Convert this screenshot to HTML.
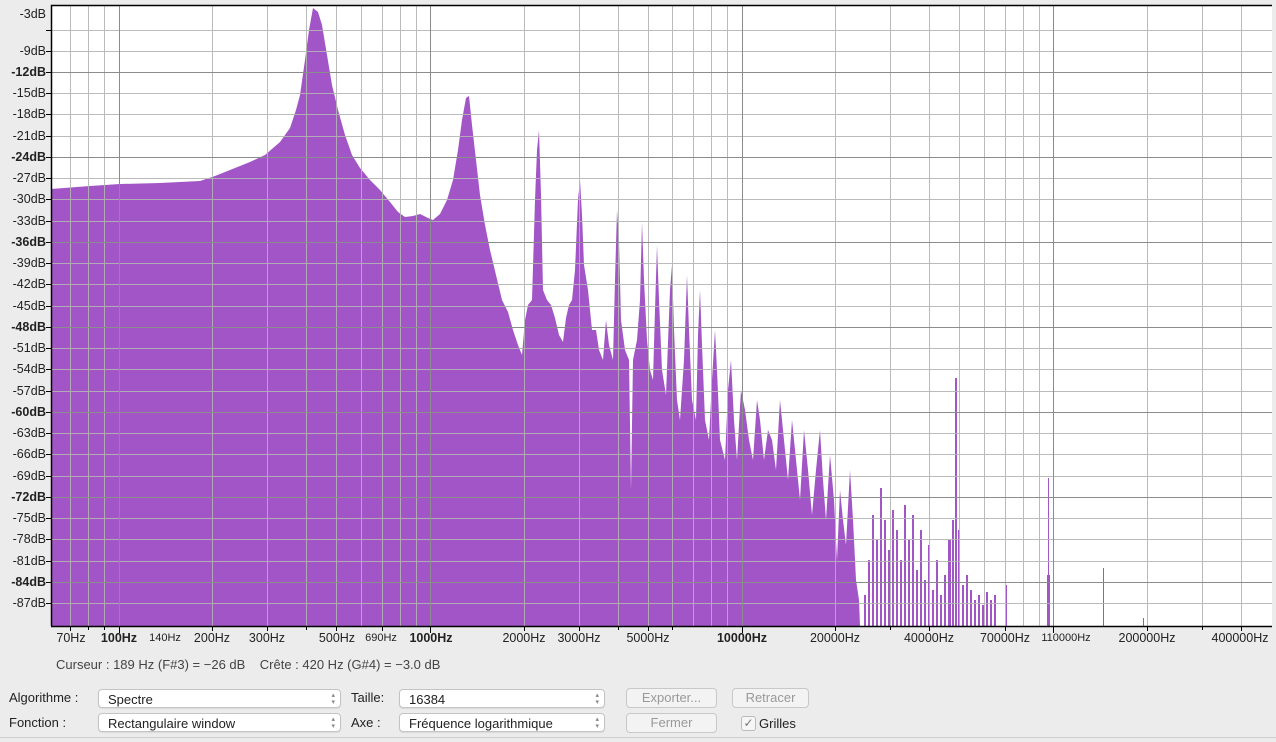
<!DOCTYPE html>
<html><head><meta charset="utf-8"><style>
html,body{margin:0;padding:0;background:#ececec;width:1276px;height:742px;overflow:hidden;font-family:"Liberation Sans",sans-serif;color:#222}
.t{position:absolute;font-size:13px;white-space:nowrap}
.sel{position:absolute;height:19px;border:1px solid #c4c4c4;border-radius:4px;background:#fff;font-size:13px;line-height:19px;padding-left:9px;box-sizing:border-box;box-shadow:0 1px 1px rgba(0,0,0,.08)}
.sel:after{content:"▴\A▾";white-space:pre;position:absolute;right:5px;top:2px;font-size:7px;line-height:7px;color:#888}
.btn{position:absolute;height:20px;border:1px solid #c8c8c8;border-radius:4px;background:#f3f3f3;color:#999;font-size:13px;line-height:18px;text-align:center;box-sizing:border-box}
</style></head><body>
<svg width="1276" height="742" style="position:absolute;left:0;top:0" font-family="Liberation Sans, sans-serif" font-size="12.5">
<rect x="51" y="6" width="1221" height="620" fill="#fff"/>
<path fill="#a155c6" d="M51,626 L51,189 L90,186 L120,184 L160,183 L200,181 L215,176 L230,170 L250,162 L265,155 L280,142 L290,128 L296,110 L300,95 L305,60 L309,30 L313,8 L318,12 L322,25 L327,55 L332,85 L338,110 L345,135 L352,155 L360,168 L370,180 L380,190 L390,202 L398,212 L405,217 L413,216 L420,214 L428,218 L433,220 L440,214 L447,200 L453,180 L458,150 L462,120 L466,98 L469,96 L472,125 L476,160 L480,195 L485,225 L490,250 L496,275 L502,300 L508,312 L513,330 L518,345 L522,355 L525,320 L528,305 L532,300 L535,200 L537,150 L539,130 L541,195 L543,290 L547,300 L551,305 L555,318 L559,335 L563,342 L566,318 L569,305 L572,300 L575,270 L578,200 L580,180 L582,215 L584,265 L588,290 L592,330 L596,330 L599,350 L603,360 L606,320 L609,345 L613,360 L615,280 L617,210 L619,240 L621,320 L625,350 L629,360 L631,490 L633,360 L637,340 L640,300 L642,222 L644,280 L647,340 L650,370 L653,380 L655,310 L657,245 L659,300 L662,370 L666,395 L670,290 L672,265 L674,330 L677,400 L680,420 L684,360 L687,275 L689,330 L692,400 L696,420 L698,335 L700,290 L702,345 L705,420 L709,440 L712,380 L715,330 L717,370 L720,440 L725,460 L728,390 L731,360 L734,420 L737,460 L741,390 L745,410 L749,440 L753,460 L757,400 L760,420 L764,460 L768,430 L772,440 L776,470 L780,400 L784,440 L788,480 L792,420 L796,460 L800,500 L804,430 L808,470 L812,515 L816,470 L820,430 L823,480 L826,520 L830,455 L834,500 L837,560 L840,490 L843,520 L846,545 L850,470 L853,520 L856,580 L859,600 L860,626 Z"/>
<g fill="#a155c6">
<rect x="864" y="595" width="2" height="31"/><rect x="868" y="560" width="2" height="66"/><rect x="872" y="515" width="2" height="111"/><rect x="876" y="540" width="2" height="86"/><rect x="880" y="488" width="2" height="138"/><rect x="884" y="520" width="2" height="106"/><rect x="888" y="550" width="2" height="76"/><rect x="892" y="510" width="2" height="116"/><rect x="896" y="530" width="2" height="96"/><rect x="900" y="560" width="2" height="66"/><rect x="904" y="505" width="2" height="121"/><rect x="908" y="540" width="2" height="86"/><rect x="912" y="515" width="2" height="111"/><rect x="916" y="570" width="2" height="56"/><rect x="920" y="530" width="2" height="96"/><rect x="924" y="580" width="2" height="46"/><rect x="928" y="545" width="2" height="81"/><rect x="932" y="590" width="2" height="36"/><rect x="936" y="560" width="2" height="66"/><rect x="940" y="595" width="2" height="31"/><rect x="944" y="575" width="2" height="51"/><rect x="948" y="540" width="3" height="86"/><rect x="952" y="520" width="2" height="106"/><rect x="955" y="378" width="2" height="248"/><rect x="958" y="530" width="2" height="96"/><rect x="962" y="585" width="2" height="41"/><rect x="966" y="575" width="2" height="51"/><rect x="970" y="590" width="2" height="36"/><rect x="974" y="600" width="2" height="26"/><rect x="978" y="595" width="2" height="31"/><rect x="982" y="605" width="2" height="21"/><rect x="986" y="592" width="2" height="34"/><rect x="990" y="600" width="2" height="26"/><rect x="994" y="595" width="2" height="31"/><rect x="1006" y="585" width="1" height="41"/><rect x="1047" y="575" width="3" height="51"/><rect x="1048" y="478" width="1" height="148"/><rect x="1103" y="568" width="1" height="58"/><rect x="1143" y="618" width="1" height="8"/>
</g>
<g stroke="#b4b4b4" stroke-width="1" opacity="0.9">
<path d="M70.5,6V626M88.5,6V626M104.5,6V626M212.5,6V626M267.5,6V626M306.5,6V626M336.5,6V626M361.5,6V626M382.5,6V626M400.5,6V626M416.5,6V626M524.5,6V626M579.5,6V626M618.5,6V626M648.5,6V626M672.5,6V626M693.5,6V626M711.5,6V626M727.5,6V626M835.5,6V626M890.5,6V626M929.5,6V626M959.5,6V626M984.5,6V626M1005.5,6V626M1023.5,6V626M1039.5,6V626M1147.5,6V626M1202.5,6V626M1241.5,6V626"/>
<path d="M51,30.5H1272M51,51.5H1272M51,93.5H1272M51,114.5H1272M51,136.5H1272M51,178.5H1272M51,199.5H1272M51,221.5H1272M51,263.5H1272M51,284.5H1272M51,306.5H1272M51,348.5H1272M51,369.5H1272M51,391.5H1272M51,433.5H1272M51,454.5H1272M51,476.5H1272M51,518.5H1272M51,539.5H1272M51,561.5H1272M51,603.5H1272"/>
</g>
<g stroke="#8c8c8c" stroke-width="1">
<path d="M119.5,6V626M430.5,6V626M742.5,6V626M1053.5,6V626"/>
<path d="M51,72.5H1272M51,157.5H1272M51,242.5H1272M51,327.5H1272M51,412.5H1272M51,497.5H1272M51,582.5H1272"/>
</g>
<path d="M51.5,626V5.5H1272" fill="none" stroke="#000" stroke-width="1.5"/>
<path d="M51,626.5H1272" stroke="#000" stroke-width="1.5"/>
<g stroke="#000"><path d="M46,30.5H52M46,72.5H52M46,157.5H52M46,242.5H52M46,327.5H52M46,412.5H52M46,497.5H52M46,582.5H52M46,51.5H52M46,93.5H52M46,114.5H52M46,136.5H52M46,178.5H52M46,199.5H52M46,221.5H52M46,263.5H52M46,284.5H52M46,306.5H52M46,348.5H52M46,369.5H52M46,391.5H52M46,433.5H52M46,454.5H52M46,476.5H52M46,518.5H52M46,539.5H52M46,561.5H52M46,603.5H52"/>
<path d="M70.5,626V631M88.5,626V630M104.5,626V630M119.5,626V633M212.5,626V631M267.5,626V631M306.5,626V630M336.5,626V631M382.5,626V631M430.5,626V633M524.5,626V631M579.5,626V631M648.5,626V631M742.5,626V633M835.5,626V631M929.5,626V631M1005.5,626V631M1053.5,626V633M1147.5,626V631M1241.5,626V631M618.5,626V630M672.5,626V630M890.5,626V630M1202.5,626V630"/></g>
<g text-anchor="end" fill="#222">
<text x="46" y="18">-3dB</text><text x="46" y="55">-9dB</text><text x="46" y="76" font-weight="bold">-12dB</text><text x="46" y="97">-15dB</text><text x="46" y="118">-18dB</text><text x="46" y="140">-21dB</text><text x="46" y="161" font-weight="bold">-24dB</text><text x="46" y="182">-27dB</text><text x="46" y="203">-30dB</text><text x="46" y="225">-33dB</text><text x="46" y="246" font-weight="bold">-36dB</text><text x="46" y="267">-39dB</text><text x="46" y="288">-42dB</text><text x="46" y="310">-45dB</text><text x="46" y="331" font-weight="bold">-48dB</text><text x="46" y="352">-51dB</text><text x="46" y="373">-54dB</text><text x="46" y="395">-57dB</text><text x="46" y="416" font-weight="bold">-60dB</text><text x="46" y="437">-63dB</text><text x="46" y="458">-66dB</text><text x="46" y="480">-69dB</text><text x="46" y="501" font-weight="bold">-72dB</text><text x="46" y="522">-75dB</text><text x="46" y="543">-78dB</text><text x="46" y="565">-81dB</text><text x="46" y="586" font-weight="bold">-84dB</text><text x="46" y="607">-87dB</text>
</g>
<g text-anchor="middle" fill="#222">
<text x="71" y="642">70Hz</text><text x="119" y="642" font-weight="bold">100Hz</text><text x="165" y="641" font-size="11">140Hz</text><text x="212" y="642">200Hz</text><text x="267" y="642">300Hz</text><text x="337" y="642">500Hz</text><text x="381" y="641" font-size="11">690Hz</text><text x="431" y="642" font-weight="bold">1000Hz</text><text x="524" y="642">2000Hz</text><text x="579" y="642">3000Hz</text><text x="648" y="642">5000Hz</text><text x="742" y="642" font-weight="bold">10000Hz</text><text x="835" y="642">20000Hz</text><text x="929" y="642">40000Hz</text><text x="1005" y="642">70000Hz</text><text x="1066" y="641" font-size="11">110000Hz</text><text x="1147" y="642">200000Hz</text><text x="1240" y="642">400000Hz</text>
</g>
</svg>
<div class="t" style="left:56px;top:657px;color:#444">Curseur : 189 Hz (F#3) = −26 dB &nbsp;&nbsp; Crête : 420 Hz (G#4) = −3.0 dB</div>
<div class="t" style="left:9px;top:690px">Algorithme :</div>
<div class="t" style="left:9px;top:715px">Fonction :</div>
<div class="sel" style="left:98px;top:689px;width:243px">Spectre</div>
<div class="sel" style="left:98px;top:713px;width:243px">Rectangulaire window</div>
<div class="t" style="left:351px;top:690px">Taille:</div>
<div class="t" style="left:351px;top:715px">Axe :</div>
<div class="sel" style="left:399px;top:689px;width:206px">16384</div>
<div class="sel" style="left:399px;top:713px;width:206px">Fréquence logarithmique</div>
<div class="btn" style="left:626px;top:688px;width:91px">Exporter...</div>
<div class="btn" style="left:732px;top:688px;width:77px">Retracer</div>
<div class="btn" style="left:626px;top:713px;width:91px">Fermer</div>
<div style="position:absolute;left:741px;top:716px;width:13px;height:13px;border:1px solid #bbb;border-radius:3px;background:#f6f6f6;font-size:12px;line-height:12px;color:#777;text-align:center">✓</div>
<div class="t" style="left:759px;top:716px">Grilles</div>
<div style="position:absolute;left:0;top:737px;width:1276px;height:1px;background:#cfcfcf"></div>
</body></html>
